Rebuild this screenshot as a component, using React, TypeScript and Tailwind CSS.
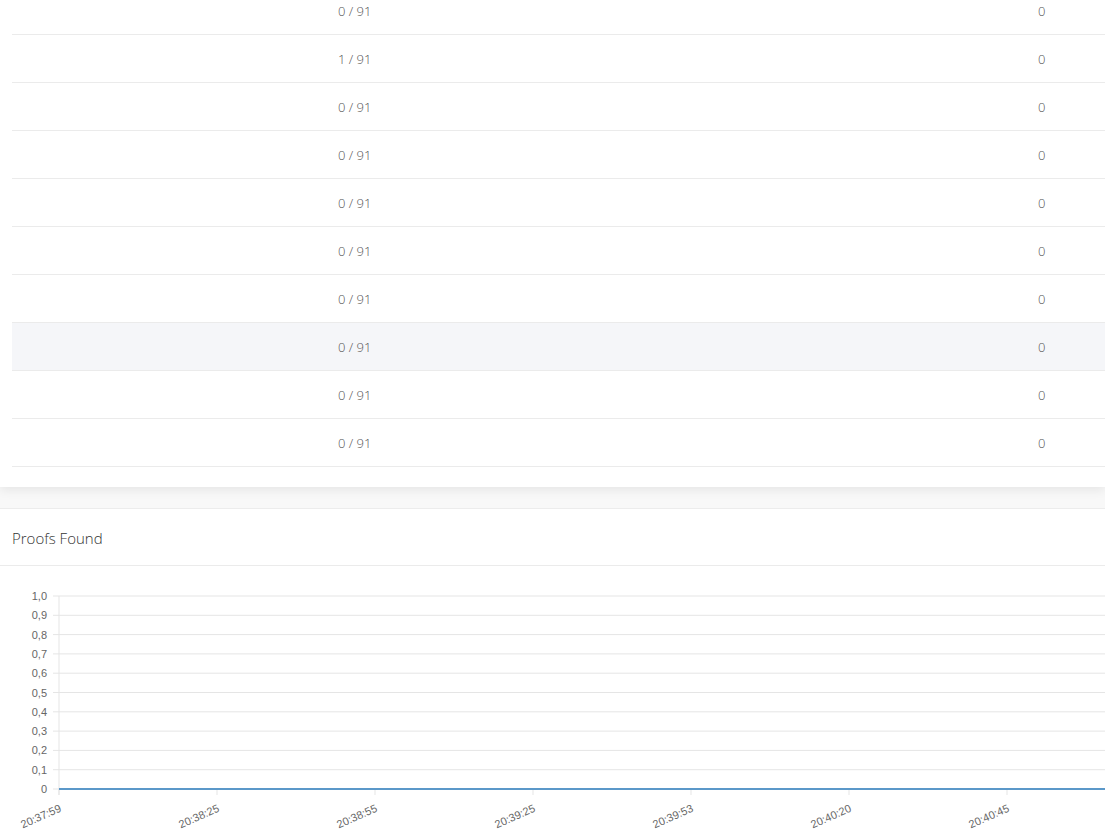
import React from 'react';

const rows = ['0 / 91', '1 / 91', '0 / 91', '0 / 91', '0 / 91', '0 / 91', '0 / 91', '0 / 91', '0 / 91', '0 / 91'];

const yLabels = ['1,0', '0,9', '0,8', '0,7', '0,6', '0,5', '0,4', '0,3', '0,2', '0,1', '0'];
const xLabels = ['20:37:59', '20:38:25', '20:38:55', '20:39:25', '20:39:53', '20:40:20', '20:40:45'];

function ProofsChart() {
    const top = 30;
    const step = 19.3;
    const axisX = 59;
    const zero = top + 10 * step;
    return (
        <svg width="1105" height="264" className="block" style={{ fontFamily: '"Liberation Sans", Arial, sans-serif' }}>
            {yLabels.map((label, i) => {
                const y = top + i * step;
                return (
                    <g key={label}>
                        <line x1={axisX - 6} x2={1105} y1={y} y2={y} stroke="#e5e5e5" strokeWidth="1" />
                        <text x={47} y={y + 4} textAnchor="end" fontSize="11" fill="#666">
                            {label}
                        </text>
                    </g>
                );
            })}
            <line x1={axisX} x2={axisX} y1={top} y2={zero + 6} stroke="#e5e5e5" strokeWidth="1" />
            {xLabels.map((label, i) => {
                const x = axisX + i * 158;
                return (
                    <g key={label}>
                        <line x1={x} x2={x} y1={zero} y2={zero + 6} stroke="#e5e5e5" />
                        <text
                            x={x + 3}
                            y={zero + 22}
                            textAnchor="end"
                            fontSize="11"
                            fill="#666"
                            transform={`rotate(-24 ${x + 3} ${zero + 22})`}
                        >
                            {label}
                        </text>
                    </g>
                );
            })}
            <line x1={axisX} x2={1105} y1={zero} y2={zero} stroke="#5b98c9" strokeWidth="2" />
        </svg>
    );
}

export default function App() {
    return (
        <div className="h-[830px] overflow-hidden bg-[#f8f8f8]" style={{ fontFamily: '"Open Sans", "Liberation Sans", sans-serif' }}>
            {/* Table card */}
            <div className="bg-white pl-3 pb-5 shadow-[0_3px_10px_rgba(0,0,0,0.08)]">
                <div className="-mt-[13px]">
                    {rows.map((value, i) => (
                        <div
                            key={i}
                            className={`flex h-[48px] items-center border-b border-[#ebebeb] pt-[2px] text-[13px] font-light text-[#555] ${
                                i === 7 ? 'bg-[#f5f6f9]' : ''
                            }`}
                        >
                            <div className="w-[326px] shrink-0" />
                            <div className="w-[700px] shrink-0">{value}</div>
                            <div>0</div>
                        </div>
                    ))}
                </div>
            </div>

            {/* Proofs Found card */}
            <div className="mt-[21px] border-t border-[#ececec] bg-white">
                <div className="flex h-[57px] items-center border-b border-[#ebebeb] px-3 pt-[2px] text-[15px] font-light text-[#333]">
                    Proofs Found
                </div>
                <ProofsChart />
            </div>
        </div>
    );
}
